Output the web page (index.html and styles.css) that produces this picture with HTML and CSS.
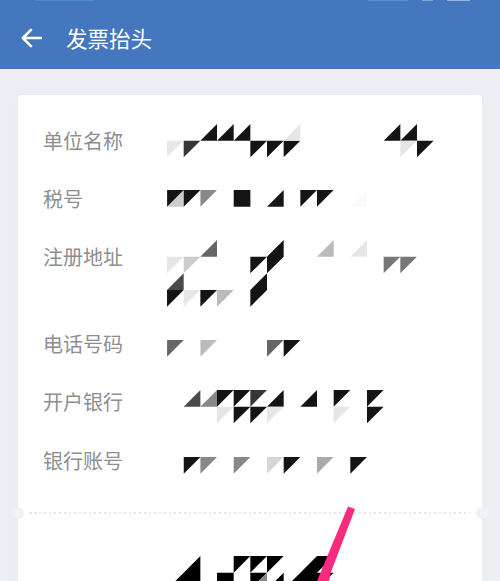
FILE: index.html
```html
<!DOCTYPE html>
<html lang="zh">
<head>
<meta charset="utf-8">
<title>发票抬头</title>
<link rel="stylesheet" href="styles.css">
</head>
<body>
<div class="page">
  <header class="header">
    <div class="status">
      <span class="mark m1"></span>
      <span class="spacer"></span>
      <span class="mark m2"></span>
      <span class="mark m3"></span>
      <span class="mark m4"></span>
    </div>
    <div class="bar">
      <svg class="back" viewBox="0 0 24 22" aria-hidden="true"><path d="M23 11H3M12 2l-9 9 9 9"/></svg>
      <h1 class="title">发票抬头</h1>
    </div>
  </header>
  <main class="card">
    <div class="row">
      <span class="label">单位名称</span>
      <svg class="mosaic two top-a" viewBox="0 0 18 2" aria-hidden="true">
        <path class="k" d="M2 1l1-1v1zM3 1l1-1v1zM4 1l1-1v1zM5 1h1l-1 1zM6 1h1l-1 1zM7 1h1l-1 1zM13 1l1-1v1zM14 1l1-1v1zM15 1h1l-1 1z"/>
        <path class="g3" d="M1 1h1l-1 1z"/>
        <path class="ge" d="M0 1h1l-1 1zM7 1l1-1v1zM14 1h1l-1 1z"/>
      </svg>
    </div>
    <div class="row">
      <span class="label">税号</span>
      <svg class="mosaic one top-b" viewBox="0 0 18 1" aria-hidden="true">
        <path class="gc" d="M0 1l1-1v1z"/>
        <path class="k" d="M0 0h1l-1 1zM1 0h1l-1 1zM4 0h1v1h-1zM6 1l1-1v1zM8 0h1l-1 1zM9 0h1l-1 1z"/>
        <path class="g8" d="M2 0h1l-1 1z"/>
        <path class="gf" d="M11 1l1-1v1z"/>
      </svg>
    </div>
    <div class="row tall">
      <span class="label">注册地址</span>
      <svg class="mosaic four top-a" viewBox="0 0 18 4" aria-hidden="true">
        <path class="g6" d="M2 1l1-1v1z"/>
        <path class="k" d="M6 1l1-1v1zM5 1h1l-1 1zM6 1h1l-1 1zM5 3l1-1v1zM0 3h1l-1 1zM2 3h1l-1 1zM5 3h1l-1 1z"/>
        <path class="gb" d="M9 1l1-1v1zM3 3h1l-1 1z"/>
        <path class="ge" d="M11 1l1-1v1zM0 1h1l-1 1zM1 3h1l-1 1z"/>
        <path class="gc" d="M1 1h1l-1 1z"/>
        <path class="g7" d="M13 1h1l-1 1zM14 1h1l-1 1z"/>
        <path class="g4" d="M0 3l1-1v1z"/>
      </svg>
    </div>
    <div class="row">
      <span class="label">电话号码</span>
      <svg class="mosaic one top-c" viewBox="0 0 18 1" aria-hidden="true">
        <path class="g6" d="M0 0h1l-1 1zM6 0h1l-1 1z"/>
        <path class="gb" d="M2 0h1l-1 1z"/>
        <path class="k" d="M7 0h1l-1 1z"/>
      </svg>
    </div>
    <div class="row">
      <span class="label">开户银行</span>
      <svg class="mosaic two top-d" viewBox="0 0 18 2" aria-hidden="true">
        <path class="g4" d="M1 1l1-1v1z"/>
        <path class="g8" d="M2 1l1-1v1z"/>
        <path class="k" d="M3 0h1l-1 1zM4 0h1l-1 1zM6 1l1-1v1zM8 1l1-1v1zM10 0h1l-1 1zM12 0h1l-1 1zM4 1h1l-1 1zM5 1h1l-1 1zM12 1h1l-1 1z"/>
        <path class="g3" d="M5 0h1l-1 1z"/>
        <path class="ge" d="M3 1h1l-1 1zM6 1h1l-1 1zM10 1h1l-1 1z"/>
      </svg>
    </div>
    <div class="row">
      <span class="label">银行账号</span>
      <svg class="mosaic one top-c" viewBox="0 0 18 1" aria-hidden="true">
        <path class="k" d="M1 0h1l-1 1zM7 0h1l-1 1zM11 0h1l-1 1z"/>
        <path class="g8" d="M2 0h1l-1 1zM4 0h1l-1 1z"/>
        <path class="gd" d="M6 0h1l-1 1z"/>
        <path class="ga" d="M9 0h1l-1 1z"/>
      </svg>
    </div>
    <div class="divider">
      <span class="notch left"></span>
      <span class="notch right"></span>
    </div>
    <svg class="mosaic two bottom" viewBox="0 0 18 2" aria-hidden="true">
      <path class="b" d="M1 1l1-1v1zM4 0h1l-1 1zM5 0h1l-1 1zM6 0h1l-1 1zM8 1l1-1v1zM9 0h1l-1 1zM0 2l1-1v1zM1 1h1v1h-1zM3 1h1v1h-1zM5 1h1l-1 1zM6 2l1-1v1zM7 2l1-1v1zM8 1h1v1h-1zM9 1h1l-1 1z"/>
      <path class="g8" d="M5 2l1-1v1z"/>
    </svg>
  </main>
  <svg class="stroke" viewBox="0 0 500 581" aria-hidden="true"><path d="M348 506.5L355 509 331 572 329 581H317z"/></svg>
</div>
</body>
</html>
```
FILE: styles.css
```css
* { box-sizing: border-box; }
html, body { margin: 0; padding: 0; }
body {
  background: #eceef3;
  font-family: "Noto Sans CJK SC", "Noto Sans", sans-serif;
}
.page {
  position: relative;
  width: 500px;
  height: 581px;
  overflow: hidden;
  display: flex;
  flex-direction: column;
}
.header {
  height: 69px;
  flex: none;
  background: #4477bd;
  color: #fff;
  display: flex;
  flex-direction: column;
}
.status {
  height: 2px;
  flex: none;
  display: flex;
  gap: 14px;
  padding: 0 30px 0 35px;
}
.mark { height: 1px; border-radius: 1px; }
.m1 { width: 60px; background: rgba(255, 255, 255, .12); }
.spacer { flex: 1; }
.m2 { width: 40px; background: rgba(255, 255, 255, .15); }
.m3 { width: 11px; background: rgba(255, 255, 255, .35); }
.m4 { width: 23px; background: rgba(255, 255, 255, .45); }
.bar {
  flex: 1;
  display: flex;
  align-items: center;
  padding: 5px 0 0 20px;
  gap: 24px;
}
.back {
  width: 22px;
  height: 20px;
  fill: none;
  stroke: #fff;
  stroke-width: 2.8;
  stroke-linecap: round;
  stroke-linejoin: round;
}
.title {
  margin: 0;
  font-size: 21.5px;
  font-weight: 400;
  line-height: 30px;
}
.card {
  flex: none;
  height: 520px;
  margin: 26px 18px 0;
  padding: 30.7px 0 0 25px;
  background: #fff;
  border-radius: 3px;
  box-shadow: 0 0 8px rgba(0, 0, 0, .02);
}
.row {
  height: 58.33px;
  display: grid;
  grid-template-columns: 123.67px 300px;
  align-items: start;
}
.row.tall { height: 86.5px; }
.label {
  font-size: 20px;
  line-height: 29px;
  color: #8e8e8e;
}
.mosaic { display: block; width: 300px; overflow: visible; }
.mosaic.one { height: 16.67px; }
.mosaic.two { height: 33.33px; }
.mosaic.four { height: 66.67px; }
.top-a { margin-top: -2.2px; }
.top-b { margin-top: 6px; }
.top-c { margin-top: 11.1px; }
.top-d { margin-top: 2.8px; }
.divider {
  position: relative;
  height: 2px;
  margin: 8.3px 12px 0 -14px;
  background: repeating-linear-gradient(90deg, #e4e5e8 0 2.5px, transparent 2.5px 5px);
}
.notch {
  position: absolute;
  top: -5px;
  width: 12px;
  height: 12px;
  border-radius: 50%;
  background: #f1f2f6;
}
.notch.left { left: -17px; }
.notch.right { right: -18px; }
.mosaic.bottom { margin: 41.7px 0 0 123.67px; }
.k { fill: #141414; }
.b { fill: #000; }
.g3 { fill: #363636; }
.g4 { fill: #4a4a4a; }
.g6 { fill: #666; }
.g7 { fill: #777; }
.g8 { fill: #888; }
.ga { fill: #aaa; }
.gb { fill: #bbb; }
.gc { fill: #ccc; }
.gd { fill: #d6d6d6; }
.ge { fill: #e6e6e6; }
.gf { fill: #fafafa; }
.stroke {
  position: absolute;
  left: 0;
  top: 0;
  width: 500px;
  height: 581px;
  fill: #fb2a7f;
}
```
